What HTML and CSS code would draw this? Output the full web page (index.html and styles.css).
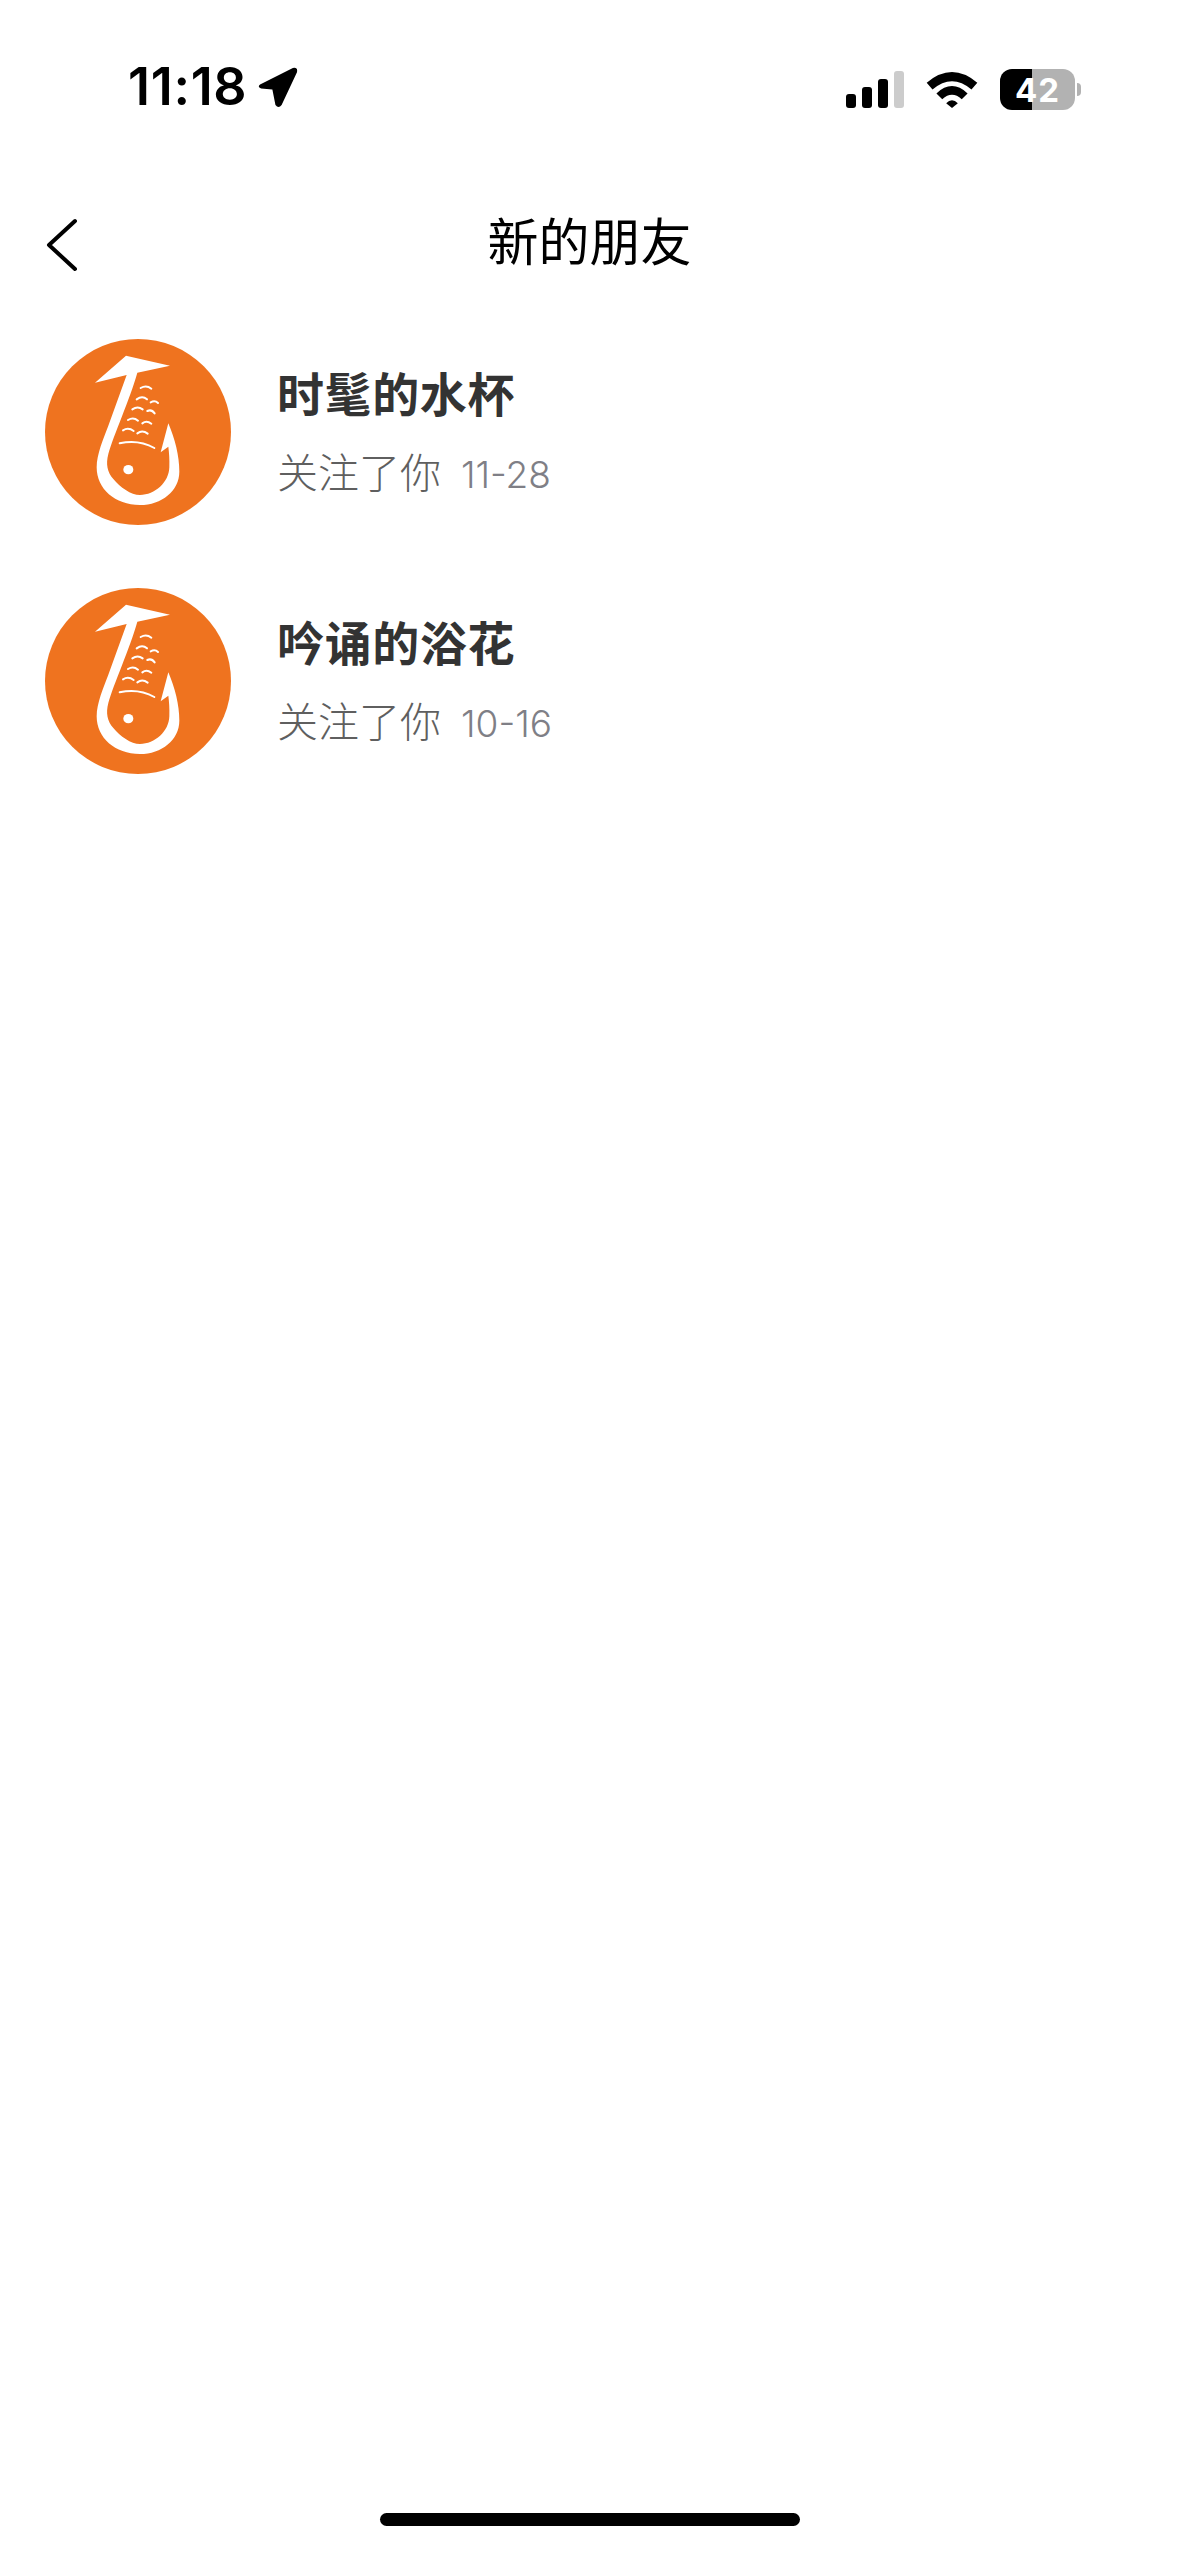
FILE: index.html
```html
<!DOCTYPE html>
<html lang="zh">
<head>
    <meta charset="UTF-8">
    <meta name="viewport" content="width=device-width, initial-scale=1.0">
    <title>新的朋友</title>
    <link rel="stylesheet" href="styles.css">
</head>
<body>
    <svg class="defs" width="0" height="0" aria-hidden="true">
        <symbol id="hook-logo" viewBox="0 0 558 558">
            <circle cx="279" cy="279" r="279" fill="#ef731f"/>
            <path fill="#fff" d="M150 131 L243 50 L375 80 L277 101 C255 180 205 290 190 345 C182 375 187 400 205 420 C225 445 258 468 285 468 C330 468 372 430 373 385 C374 360 372 340 370 323 L347 340 L370 253 C390 300 403 350 403 398 C403 455 350 498 285 498 C210 498 155 450 155 385 C155 345 175 300 190 260 L245 108 Z"/>
            <ellipse cx="250" cy="392" rx="15" ry="14" fill="#fff"/>
            <g fill="none" stroke="#fff" stroke-linecap="round" stroke-width="6">
                <path d="M287 147 Q304 137 319 149"/>
                <path d="M275 181 Q292 168 306 181"/>
                <path d="M317 190 Q330 183 339 192"/>
                <path d="M262 211 Q278 200 293 211"/>
                <path d="M307 216 Q320 210 329 223"/>
                <path d="M249 243 Q265 233 279 245"/>
                <path d="M292 253 Q305 243 319 254"/>
                <path d="M234 274 Q250 264 266 276"/>
                <path d="M277 283 Q292 272 308 284"/>
                <path d="M224 313 Q280 300 328 327"/>
            </g>
        </symbol>
    </svg>

    <div class="screen">
        <!-- status bar -->
        <div class="status-bar">
            <div class="status-left">
                <span class="time">11:18</span>
                <svg class="location" viewBox="0 0 40 40">
                    <path d="M3 17 L35 1 Q40 0 39 5 L24 37 Q21 41 18 37 L15 22 L4 21 Q0 19 3 17 Z"/>
                </svg>
            </div>
            <div class="status-right">
                <div class="signal">
                    <span class="bar bar-1"></span>
                    <span class="bar bar-2"></span>
                    <span class="bar bar-3"></span>
                    <span class="bar bar-4"></span>
                </div>
                <svg class="wifi" viewBox="0 0 52 38">
                    <path d="M0 12 Q26 -10 52 12 L46 19 Q26 2 6 19 Z"/>
                    <path d="M10 23 Q26 8 42 23 L36 29 Q26 20 16 29 Z"/>
                    <path d="M20 33 Q26 27 32 33 L26 38 Z"/>
                </svg>
                <div class="battery">
                    <div class="battery-body"><span class="battery-level">42</span></div>
                    <span class="battery-cap"></span>
                </div>
            </div>
        </div>

        <!-- nav -->
        <div class="nav">
            <svg class="back" viewBox="0 0 32 54">
                <path d="M29 3 L3 27 L29 51"/>
            </svg>
            <h1 class="nav-title">新的朋友</h1>
        </div>

        <!-- list -->
        <div class="friend-list">
            <div class="friend">
                <svg class="avatar"><use href="#hook-logo"/></svg>
                <div class="friend-info">
                    <div class="friend-name">时髦的水杯</div>
                    <div class="friend-sub"><span class="action">关注了你</span><span class="date">11-28</span></div>
                </div>
            </div>
            <div class="friend">
                <svg class="avatar"><use href="#hook-logo"/></svg>
                <div class="friend-info">
                    <div class="friend-name">吟诵的浴花</div>
                    <div class="friend-sub"><span class="action">关注了你</span><span class="date">10-16</span></div>
                </div>
            </div>
        </div>

        <div class="home-bar"></div>
    </div>
</body>
</html>
```

FILE: styles.css
```css
* {
    margin: 0;
    padding: 0;
    box-sizing: border-box;
}

html, body {
    width: 100%;
    height: 100%;
    background: #fff;
    overflow: hidden;
    font-family: Inter, "Noto Sans CJK SC", sans-serif;
}

.defs {
    position: absolute;
}

.screen {
    height: 2556px;
    display: flex;
    flex-direction: column;
}

/* status bar */
.status-bar {
    height: 176px;
    padding: 64px 98px 0 128px;
    display: flex;
    justify-content: space-between;
    align-items: flex-start;
}

.status-left {
    display: flex;
    align-items: center;
    gap: 10px;
}

.time {
    font-size: 52px;
    line-height: 46px;
    font-weight: 600;
    color: #000;
    letter-spacing: 0.7px;
}

.location {
    width: 41px;
    height: 41px;
    fill: #000;
}

.status-right {
    display: flex;
    align-items: center;
    gap: 22px;
    padding-top: 5px;
}

.signal {
    display: flex;
    align-items: flex-end;
    gap: 6px;
    height: 37px;
}

.bar {
    width: 10px;
    border-radius: 3px;
    background: #000;
}

.bar-1 { height: 14px; }
.bar-2 { height: 21px; }
.bar-3 { height: 29px; }
.bar-4 { height: 37px; background: #ccc; }

.wifi {
    width: 52px;
    height: 37px;
    fill: #000;
}

.battery {
    display: flex;
    align-items: center;
    gap: 2px;
}

.battery-body {
    width: 75px;
    height: 41px;
    border-radius: 12px;
    background: linear-gradient(to right, #000 0, #000 32px, #b2b2b2 32px);
    display: flex;
    align-items: center;
    justify-content: center;
}

.battery-level {
    color: #fff;
    font-size: 33px;
    font-weight: 700;
    letter-spacing: 1px;
}

.battery-cap {
    width: 4px;
    height: 13px;
    background: #b2b2b2;
    border-radius: 0 6px 6px 0;
}

/* nav */
.nav {
    height: 132px;
    padding-left: 46px;
    display: flex;
    align-items: center;
    position: relative;
}

.back {
    width: 32px;
    height: 54px;
    margin-top: 5px;
    fill: none;
    stroke: #000;
    stroke-width: 4;
    stroke-linecap: round;
    stroke-linejoin: round;
}

.nav-title {
    position: absolute;
    left: 0;
    right: 0;
    margin-top: -6px;
    text-align: center;
    font-size: 51px;
    font-weight: 400;
    color: #000;
}

/* list */
.friend-list {
    padding: 31px 45px 0;
    display: flex;
    flex-direction: column;
    gap: 63px;
}

.friend {
    display: flex;
    align-items: center;
    gap: 46px;
}

.avatar {
    width: 186px;
    height: 186px;
    flex-shrink: 0;
}

.friend-info {
    display: flex;
    flex-direction: column;
    gap: 20px;
    padding-top: 3px;
}

.friend-name {
    font-size: 47px;
    line-height: 60px;
    font-weight: 700;
    color: #333;
    letter-spacing: 0.6px;
}

.friend-sub {
    display: flex;
    align-items: baseline;
    gap: 20px;
    line-height: 56px;
}

.action {
    font-size: 41px;
    font-weight: 300;
    color: #5f5f5f;
}

.date {
    font-size: 37px;
    font-weight: 300;
    color: #7f7f86;
}

.home-bar {
    width: 420px;
    height: 13px;
    border-radius: 7px;
    background: #000;
    margin: auto auto 30px;
}
```
